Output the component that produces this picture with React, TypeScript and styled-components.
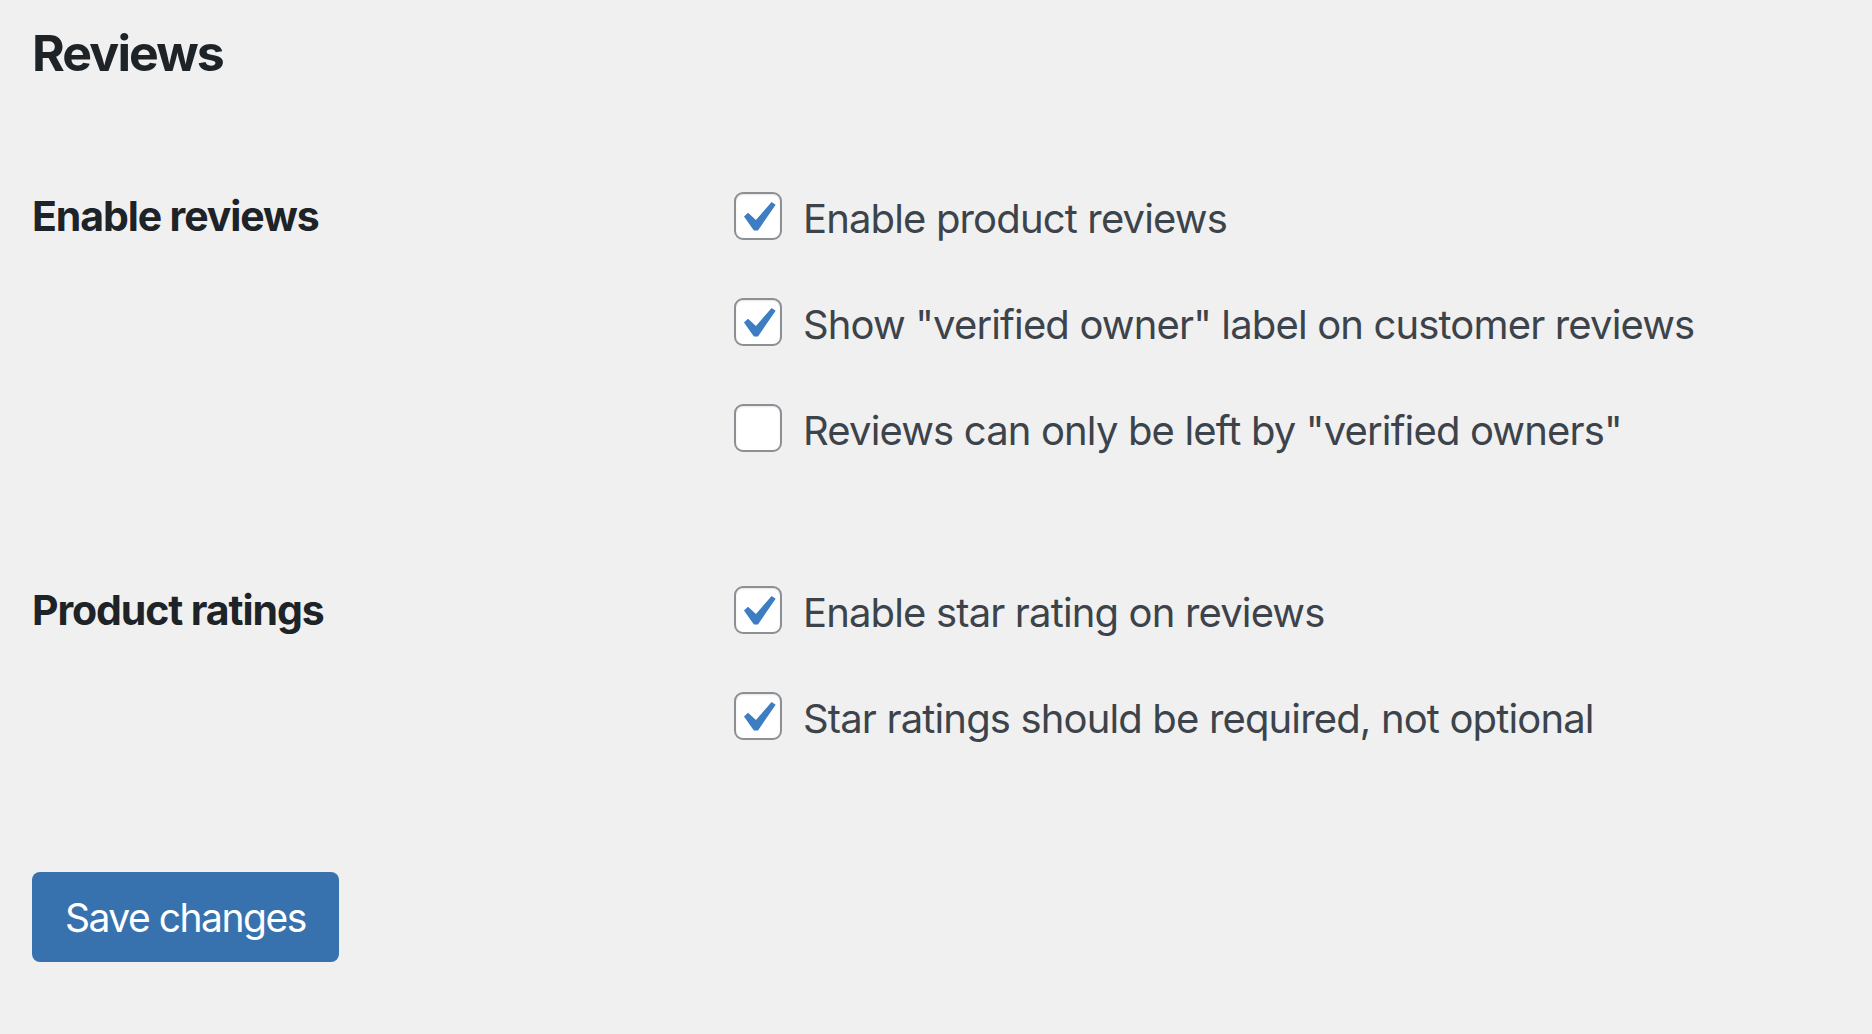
import React from 'react'
import styled, { createGlobalStyle } from 'styled-components'

const GlobalStyle = createGlobalStyle`
  html, body {
    margin: 0;
    padding: 0;
    background: #f0f0f1;
  }
  body {
    font-family: Inter, "Noto Sans", "Liberation Sans", sans-serif;
    color: #3c434a;
  }
`

type Option = { label: string; checked: boolean }
type Section = { title: string; options: Option[] }

const sections: Section[] = [
  {
    title: 'Enable reviews',
    options: [
      { label: 'Enable product reviews', checked: true },
      { label: 'Show "verified owner" label on customer reviews', checked: true },
      { label: 'Reviews can only be left by "verified owners"', checked: false },
    ],
  },
  {
    title: 'Product ratings',
    options: [
      { label: 'Enable star rating on reviews', checked: true },
      { label: 'Star ratings should be required, not optional', checked: true },
    ],
  },
]

const CheckBox: React.FC<{ checked: boolean }> = ({ checked }) => (
  <Box>
    {checked && (
      <svg viewBox="3.16 2.27 14.43 14.43" width="44" height="44">
        <path
          d="M14.83 4.89l1.34.94-5.81 8.38H9.02L5.78 9.67l1.34-1.25 2.57 2.4z"
          fill="#3f7dc3"
        />
      </svg>
    )}
  </Box>
)

export default function App() {
  const [state, setState] = React.useState(sections)

  const toggle = (si: number, oi: number) =>
    setState((prev) =>
      prev.map((s, i) =>
        i !== si
          ? s
          : {
              ...s,
              options: s.options.map((o, j) =>
                j === oi ? { ...o, checked: !o.checked } : o,
              ),
            },
      ),
    )

  return (
    <Page>
      <GlobalStyle />
      <Title>Reviews</Title>
      <Table>
        {state.map((section, si) => (
          <Row key={section.title}>
            <RowLabel>{section.title}</RowLabel>
            <Options>
              {section.options.map((opt, oi) => (
                <OptionLabel key={opt.label} onClick={() => toggle(si, oi)}>
                  <CheckBox checked={opt.checked} />
                  <OptionText>{opt.label}</OptionText>
                </OptionLabel>
              ))}
            </Options>
          </Row>
        ))}
      </Table>
      <SaveButton type="button">Save changes</SaveButton>
    </Page>
  )
}

const Page = styled.div`
  padding: 23px 32px 40px;
`
const Title = styled.h1`
  margin: 0;
  font-size: 50px;
  line-height: 61px;
  font-weight: 700;
  letter-spacing: -1.9px;
  color: #1d2327;
`
const Table = styled.div`
  margin-top: 108px;
  display: flex;
  flex-direction: column;
  gap: 131px;
`
const Row = styled.div`
  display: grid;
  grid-template-columns: 702px 1fr;
`
const RowLabel = styled.div`
  font-size: 41px;
  line-height: 48px;
  font-weight: 700;
  letter-spacing: -1.1px;
  color: #1d2327;
`
const Options = styled.div`
  display: flex;
  flex-direction: column;
  gap: 55px;
`
const OptionLabel = styled.label`
  display: flex;
  align-items: flex-start;
  gap: 21px;
  cursor: pointer;
`
const OptionText = styled.span`
  padding-top: 3px;
  font-size: 40px;
  line-height: 48px;
  letter-spacing: -0.85px;
  color: #3c434a;
`
const Box = styled.span`
  box-sizing: border-box;
  width: 48px;
  height: 48px;
  flex: none;
  display: flex;
  border: 2px solid #8c8f94;
  border-radius: 9px;
  background: #fff;
  box-shadow: inset 0 1px 2px rgba(0, 0, 0, 0.1);
`
const SaveButton = styled.button`
  margin-top: 129px;
  box-sizing: border-box;
  height: 90px;
  padding: 0 33px;
  border: none;
  border-radius: 8px;
  background: #3872ae;
  color: #fff;
  font-family: inherit;
  font-size: 39px;
  letter-spacing: -1.5px;
  cursor: pointer;
`
